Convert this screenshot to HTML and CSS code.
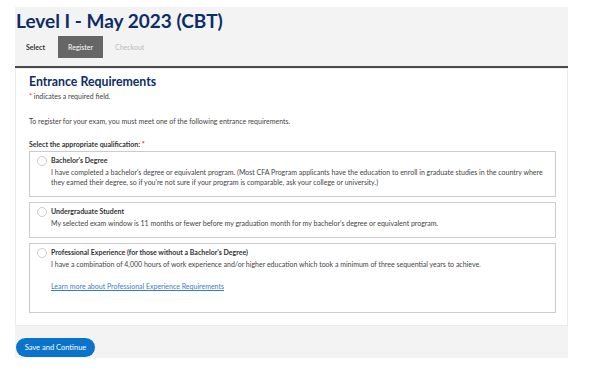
FILE: index.html
```html
<!DOCTYPE html>
<html lang="en">
<head>
    <meta charset="UTF-8">
    <meta name="viewport" content="width=device-width, initial-scale=1.0">
    <title>Level I - May 2023 (CBT)</title>
    <link rel="stylesheet" href="styles.css">
</head>
<body>
    <div class="page">
        <div class="header">
            <h1>Level I - May 2023 (CBT)</h1>
            <div class="tabs">
                <span class="tab done">Select</span>
                <span class="tab active">Register</span>
                <span class="tab todo">Checkout</span>
            </div>
        </div>

        <div class="card">
            <h2>Entrance Requirements</h2>
            <p class="note"><span class="req">*</span> indicates a required field.</p>
            <p class="intro">To register for your exam, you must meet one of the following entrance requirements.</p>
            <p class="label">Select the appropriate qualification: <span class="req">*</span></p>

            <label class="option">
                <span class="radio"></span>
                <span class="option-text">
                    <span class="option-title">Bachelor's Degree</span>
                    <span class="option-desc">I have completed a bachelor's degree or equivalent program. (Most CFA Program applicants have the education to enroll in graduate studies in the country where they earned their degree, so if you're not sure if your program is comparable, ask your college or university.)</span>
                </span>
            </label>

            <label class="option">
                <span class="radio"></span>
                <span class="option-text">
                    <span class="option-title">Undergraduate Student</span>
                    <span class="option-desc">My selected exam window is 11 months or fewer before my graduation month for my bachelor's degree or equivalent program.</span>
                </span>
            </label>

            <label class="option tall">
                <span class="radio"></span>
                <span class="option-text">
                    <span class="option-title">Professional Experience (for those without a Bachelor's Degree)</span>
                    <span class="option-desc">I have a combination of 4,000 hours of work experience and/or higher education which took a minimum of three sequential years to achieve.</span>
                    <a class="more" href="#">Learn more about Professional Experience Requirements</a>
                </span>
            </label>
        </div>

        <div class="footer">
            <button class="save">Save and Continue</button>
        </div>
    </div>
</body>
</html>
```

FILE: styles.css
```css
body {
    margin: 0;
    padding: 0;
    font-family: Lato, "Open Sans", sans-serif;
    color: #444;
    background: #fff;
}

.page {
    margin: 7px 0 0 15px;
    width: 553px;
    background: #f3f3f3;
}

.header {
    padding: 0 0 8px 1px;
    border-bottom: 2px solid #4a4a4a;
}

h1 {
    margin: 0;
    font-size: 19px;
    line-height: 27px;
    font-weight: 700;
    color: #0d2d66;
}

.tabs {
    display: flex;
    margin-top: 2px;
    font-size: 7px;
}

.tab {
    height: 22px;
    line-height: 22px;
    padding: 0 10px;
}

.tab.done {
    padding-right: 13px;
    font-weight: 700;
    color: #333;
}

.tab.active {
    background: #666;
    color: #fff;
}

.tab.todo {
    padding-left: 12px;
    color: #bbb;
}

.card {
    background: #fff;
    border: 1px solid #ececec;
    padding: 5px 11px 12px 13px;
}

h2 {
    margin: 0;
    font-size: 12.3px;
    font-weight: 700;
    color: #0d2d66;
}

.card p {
    margin: 0;
    font-size: 7px;
    line-height: 10px;
}

.note {
    margin-top: 2px !important;
}

.intro {
    margin-top: 15px !important;
}

.label {
    margin-top: 13px !important;
    font-weight: 700;
    color: #333;
}

.req {
    color: #d33;
}

.option {
    display: flex;
    gap: 4px;
    margin-top: 4px;
    padding: 3px 8px 9px 7px;
    border: 1px solid #ccc;
    font-size: 7px;
    line-height: 10px;
}

.label + .option {
    margin-top: 2px;
}

.option + .option {
    margin-top: 5px;
}

.radio {
    flex: none;
    width: 8px;
    height: 8px;
    margin-top: 1px;
    border: 1px solid #ccc;
    border-radius: 50%;
    background: #fff;
}

.option-text {
    display: flex;
    flex-direction: column;
}

.option-title {
    font-weight: 700;
    color: #333;
    margin-bottom: 2px;
}

.option.tall {
    padding-bottom: 21px;
}

.more {
    margin-top: 12px;
    color: #3d7cc9;
    text-decoration: underline;
}

.footer {
    padding: 8px 0 1px 1px;
}

.save {
    height: 19px;
    width: 79px;
    padding: 0;
    border: none;
    border-radius: 10px;
    background: #0a74cc;
    color: #fff;
    font-family: Lato, sans-serif;
    font-size: 7.5px;
}
```
